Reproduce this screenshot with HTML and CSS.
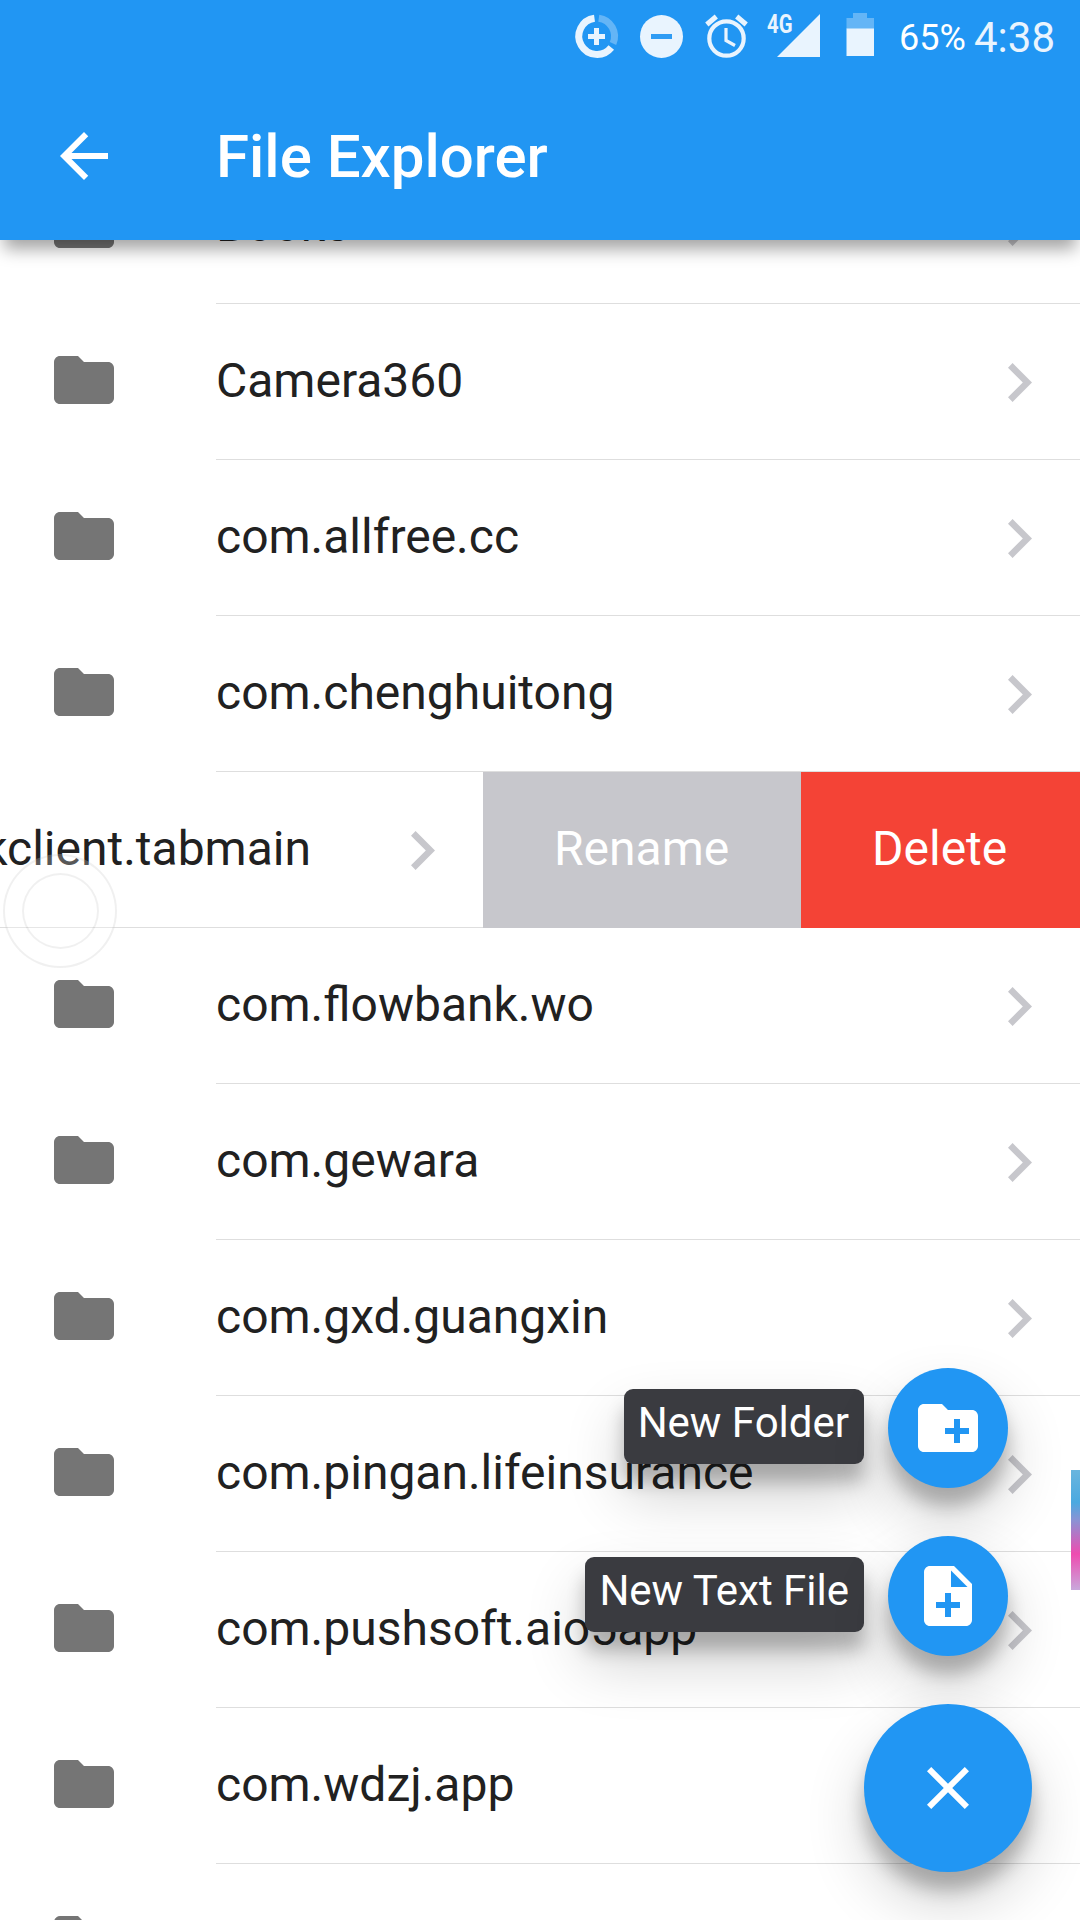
FILE: index.html
```html
<!DOCTYPE html>
<html lang="en">
<head>
<meta charset="utf-8">
<title>File Explorer</title>
<link rel="stylesheet" href="styles.css">
</head>
<body>
<svg class="defs" width="0" height="0">
  <symbol id="folder" viewBox="0 0 24 24"><path d="M10 4H4c-1.1 0-1.99.9-1.99 2L2 18c0 1.1.9 2 2 2h16c1.1 0 2-.9 2-2V8c0-1.1-.9-2-2-2h-8l-2-2z"/></symbol>
  <symbol id="chevron" viewBox="0 0 7.41 12"><path d="M1.41 0L0 1.41 4.58 6 0 10.59 1.41 12l6-6z"/></symbol>
</svg>
<div class="screen">
  <header class="header">
    <div class="status">
      <svg class="status-icons" width="320" height="72" viewBox="560 0 320 72">
        <g fill="none" stroke="#e9f4fe" stroke-width="7">
          <path d="M594.5 18.2A18.200 18.200 0 1 0 611.3 47.500"/>
          <path d="M598.8 18.2A18.200 18.200 0 0 1 613 43.500" stroke="#64b5f6"/>
          <path d="M596.5 28v17M588 36.500h17" stroke-width="5"/>
        </g>
        <circle cx="661.5" cy="36.500" r="21.500" fill="#e9f4fe"/>
        <path d="M651 36.500h21" stroke="#2f9cf4" stroke-width="5"/>
        <g fill="none" stroke="#e9f4fe">
          <circle cx="726.500" cy="38.500" r="17.200" stroke-width="4.200"/>
          <path d="M726 28v12.500l9 5" stroke-width="3.200"/>
          <path d="M706.800 24.500l9.500-8M746.200 24.500l-9.500-8" stroke-width="5"/>
        </g>
        <text class="network" x="767" y="33.300" textLength="25.500" lengthAdjust="spacingAndGlyphs">4G</text>
        <path d="M820 14v43h-43z" fill="#e9f4fe"/>
        <path d="M853 13h14v5h7v11h-27.500V18h6.500z" fill="#64b5f6"/>
        <path d="M846.500 28.500h27.500V56h-27.500z" fill="#e9f4fe"/>
      </svg>
      <span class="percent">65%</span>
      <span class="clock">4:38</span>
    </div>
    <div class="navbar">
      <svg class="back" viewBox="0 0 24 24"><path d="M20 11H7.830l5.590-5.590L12 4l-8 8 8 8 1.410-1.410L7.830 13H20v-2z"/></svg>
      <h1 class="title">File Explorer</h1>
    </div>
  </header>
  <main class="list">
    <div class="row"><svg class="folder"><use href="#folder"/></svg><div class="body"><span>Books</span><svg class="chev"><use href="#chevron"/></svg></div></div>
    <div class="row"><svg class="folder"><use href="#folder"/></svg><div class="body"><span>Camera360</span><svg class="chev"><use href="#chevron"/></svg></div></div>
    <div class="row"><svg class="folder"><use href="#folder"/></svg><div class="body"><span>com.allfree.cc</span><svg class="chev"><use href="#chevron"/></svg></div></div>
    <div class="row"><svg class="folder"><use href="#folder"/></svg><div class="body"><span>com.chenghuitong</span><svg class="chev"><use href="#chevron"/></svg></div></div>
    <div class="row swiped">
      <div class="body"><span>kclient.tabmain</span><svg class="chev"><use href="#chevron"/></svg></div>
      <div class="action rename">Rename</div>
      <div class="action delete">Delete</div>
    </div>
    <div class="row"><svg class="folder"><use href="#folder"/></svg><div class="body"><span>com.flowbank.wo</span><svg class="chev"><use href="#chevron"/></svg></div></div>
    <div class="row"><svg class="folder"><use href="#folder"/></svg><div class="body"><span>com.gewara</span><svg class="chev"><use href="#chevron"/></svg></div></div>
    <div class="row"><svg class="folder"><use href="#folder"/></svg><div class="body"><span>com.gxd.guangxin</span><svg class="chev"><use href="#chevron"/></svg></div></div>
    <div class="row"><svg class="folder"><use href="#folder"/></svg><div class="body"><span>com.pingan.lifeinsurance</span><svg class="chev"><use href="#chevron"/></svg></div></div>
    <div class="row"><svg class="folder"><use href="#folder"/></svg><div class="body"><span>com.pushsoft.aio5app</span><svg class="chev"><use href="#chevron"/></svg></div></div>
    <div class="row"><svg class="folder"><use href="#folder"/></svg><div class="body"><span>com.wdzj.app</span><svg class="chev"><use href="#chevron"/></svg></div></div>
    <div class="row"><svg class="folder"><use href="#folder"/></svg><div class="body"></div></div>
  </main>
  <div class="touch"></div>
  <div class="edge"></div>
  <div class="dial">
    <div class="dial-item">
      <span class="label">New Folder</span>
      <div class="fab small"><svg viewBox="0 0 24 24"><path d="M20 6h-8l-2-2H4c-1.110 0-1.990.890-1.990 2L2 18c0 1.110.890 2 2 2h16c1.110 0 2-.890 2-2V8c0-1.110-.890-2-2-2zm-1 8h-3v3h-2v-3h-3v-2h3V9h2v3h3v2z"/></svg></div>
    </div>
    <div class="dial-item">
      <span class="label">New Text File</span>
      <div class="fab small"><svg viewBox="0 0 24 24"><path d="M14 2H6c-1.100 0-1.990.900-1.990 2L4 20c0 1.100.890 2 1.990 2H18c1.100 0 2-.900 2-2V8l-6-6zm2 14h-3v3h-2v-3H8v-2h3v-3h2v3h3v2zm-3-7V3.500L18.500 9H13z"/></svg></div>
    </div>
    <div class="fab"><svg viewBox="0 0 24 24"><path d="M19 6.410L17.590 5 12 10.590 6.410 5 5 6.410 10.590 12 5 17.590 6.410 19 12 13.410 17.590 19 19 17.590 13.410 12z"/></svg></div>
  </div>
</div>
</body>
</html>
```
FILE: styles.css
```css
* { box-sizing: border-box; }

body {
  margin: 0;
  background: #fff;
  color: #212121;
  font-family: Roboto, sans-serif;
}

.defs { position: absolute; }

.screen {
  position: relative;
  width: 1080px;
  height: 1920px;
  overflow: hidden;
}

.header {
  position: relative;
  z-index: 2;
  height: 240px;
  background: #2196f3;
  color: #fff;
  box-shadow: 0 13px 16px -4px rgba(0, 0, 0, .36);
}

.status {
  display: flex;
  height: 72px;
  padding-left: 560px;
  white-space: nowrap;
}

.status-icons { flex: none; }

.network {
  fill: #e9f4fe;
  font-size: 26px;
  font-weight: 700;
}

.percent {
  margin-left: 19px;
  width: 75px;
  font-size: 36px;
  line-height: 76px;
}

.clock {
  color: #e9f4fe;
  font-size: 42px;
  line-height: 75px;
}

.navbar {
  display: flex;
  align-items: center;
  height: 168px;
  padding-left: 48px;
}

.back {
  width: 72px;
  height: 72px;
  fill: #fff;
}

.title {
  margin: 2px 0 0 96px;
  font-size: 60px;
  font-weight: 500;
  line-height: 72px;
}

.list { margin-top: -92px; }

.row {
  display: flex;
  height: 156px;
  padding-left: 48px;
}

.folder {
  flex: none;
  width: 72px;
  height: 72px;
  margin: 40px 96px 0 0;
  fill: #757575;
}

.body {
  flex: 1;
  display: flex;
  align-items: center;
  justify-content: space-between;
  padding: 0 48px 3px 0;
  border-bottom: 1px solid #dedede;
  font-size: 48px;
  white-space: nowrap;
}

.chev {
  flex: none;
  width: 24px;
  height: 39px;
  margin-top: 5px;
  fill: #c7c7cc;
}

.swiped { padding-left: 0; }

.swiped .body {
  flex: none;
  width: 483px;
  justify-content: flex-end;
  gap: 100px;
}

.action {
  padding-left: 71px;
  color: #fff;
  font-size: 48px;
  line-height: 154px;
}

.rename {
  flex: none;
  width: 318px;
  background: #c7c7cc;
}

.delete {
  flex: 1;
  background: #f44336;
}

.touch {
  position: absolute;
  left: 3px;
  top: 854px;
  width: 114px;
  height: 114px;
  border: 2px solid rgba(0, 0, 0, .06);
  border-radius: 50%;
  background: rgba(255, 255, 255, .25);
}

.touch::after {
  content: "";
  position: absolute;
  inset: 17px 16px 17px 17px;
  border: 2px solid rgba(0, 0, 0, .06);
  border-radius: 50%;
}

.edge {
  position: absolute;
  right: 0;
  top: 1470px;
  width: 9px;
  height: 120px;
  background: linear-gradient(#69b5de, #4ba9e0 27%, #8b92d4 42%, #ee4cb0 70%, #c9a8dc);
}

.dial {
  position: absolute;
  right: 48px;
  bottom: 48px;
  display: flex;
  flex-direction: column;
  align-items: flex-end;
  gap: 48px;
}

.dial-item {
  display: flex;
  align-items: center;
  gap: 24px;
  padding-right: 24px;
}

.label {
  height: 75px;
  margin-top: -3px;
  padding: 0 15px 0 14px;
  border-radius: 9px;
  background: #3a3b40;
  color: #fff;
  font-size: 42px;
  line-height: 68px;
  white-space: nowrap;
  box-shadow: 0 30px 60px rgba(0, 0, 0, .19), 0 18px 18px rgba(0, 0, 0, .23);
}

.fab {
  display: flex;
  align-items: center;
  justify-content: center;
  width: 168px;
  height: 168px;
  border-radius: 50%;
  background: #2196f3;
  box-shadow: 0 30px 60px rgba(0, 0, 0, .19), 0 18px 18px rgba(0, 0, 0, .23);
}

.fab svg {
  width: 72px;
  height: 72px;
  fill: #fff;
}

.small {
  width: 120px;
  height: 120px;
}
```
